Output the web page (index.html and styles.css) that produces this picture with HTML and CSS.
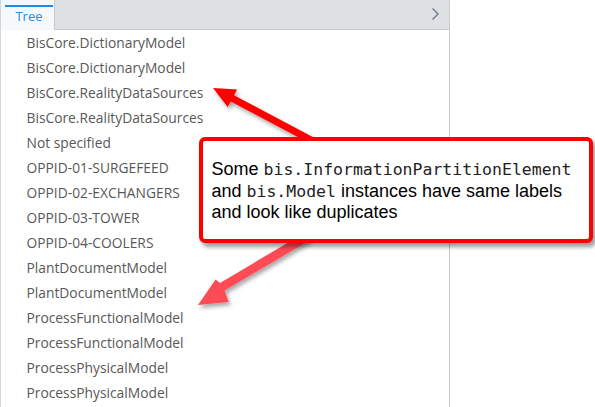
FILE: index.html
```html
<!DOCTYPE html>
<html>
<head>
<meta charset="utf-8">
<link rel="stylesheet" href="styles.css">
</head>
<body>
<div class="panel">
  <div class="header">
    <div class="tab"><span class="tab-label">Tree</span></div>
    <div class="header-fill">
      <svg class="chevron" width="9" height="14" viewBox="0 0 9 14"><path d="M1.5 1.5 L7 7 L1.5 12.5" fill="none" stroke="#6e7a88" stroke-width="1.4"/></svg>
    </div>
  </div>
  <ul class="tree">
    <li>BisCore.DictionaryModel</li>
    <li>BisCore.DictionaryModel</li>
    <li>BisCore.RealityDataSources</li>
    <li>BisCore.RealityDataSources</li>
    <li>Not specified</li>
    <li>OPPID-01-SURGEFEED</li>
    <li>OPPID-02-EXCHANGERS</li>
    <li>OPPID-03-TOWER</li>
    <li>OPPID-04-COOLERS</li>
    <li>PlantDocumentModel</li>
    <li>PlantDocumentModel</li>
    <li>ProcessFunctionalModel</li>
    <li>ProcessFunctionalModel</li>
    <li>ProcessPhysicalModel</li>
    <li>ProcessPhysicalModel</li>
  </ul>
</div>
<svg class="arrows" width="595" height="407" viewBox="0 0 595 407">
  <defs>
    <filter id="sh" x="-20%" y="-20%" width="140%" height="140%">
      <feDropShadow dx="2" dy="3" stdDeviation="2" flood-color="#000" flood-opacity="0.35"/>
    </filter>
  </defs>
  <polygon filter="url(#sh)" fill="#ff0000" points="213,88 237.1,89.5 234.0,95.2 325,143.6 321.8,149.8 230.8,101.4 227.7,107.1"/>
  <polygon filter="url(#sh)" fill="#ff4b55" points="198,305 215.5,279.6 220.0,282.9 306,232 310.6,239.8 224.6,290.6 228.7,302.0"/>
</svg>
<div class="callout">
  <p>Some <code>bis.InformationPartitionElement</code><br>and <code>bis.Model</code> instances have same labels<br>and look like duplicates</p>
</div>
</body>
</html>
```
FILE: styles.css
```css
html, body {
  margin: 0;
  padding: 0;
  background: #ffffff;
  width: 595px;
  height: 407px;
  overflow: hidden;
  position: relative;
}
.panel {
  height: 407px;
  border-left: 1px solid #d3d6d9;
  border-right: 1px solid #c8cbce;
  box-sizing: border-box;
  width: 450px;
  font-family: "Open Sans", sans-serif;
}
.header {
  display: flex;
  height: 30px;
  box-sizing: border-box;
}
.tab {
  width: 54px;
  background: #f7f8f9;
  border-right: 1px solid #c8cbce;
  box-sizing: border-box;
  padding: 5px 1px 0 4px;
}
.tab-label {
  display: block;
  border-top: 2px solid #1f8ae0;
  color: #2a8ae0;
  font-size: 13px;
  line-height: 18px;
  text-align: center;
}
.header-fill {
  flex: 1;
  background: #dee1e4;
  border-bottom: 1px solid #c8cbce;
  display: flex;
  justify-content: flex-end;
  align-items: flex-start;
  padding: 7px 9px 0 0;
}
.tree {
  list-style: none;
  margin: 0;
  padding: 0 0 0 25.5px;
}
.tree li {
  font-size: 13.8px;
  line-height: 25px;
  height: 25px;
  color: #585858;
}
.arrows {
  position: absolute;
  left: 0;
  top: 0;
}
.callout {
  position: absolute;
  left: 199px;
  top: 137px;
  width: 394px;
  height: 106px;
  box-sizing: border-box;
  border: 4px solid #ff0000;
  border-radius: 6px;
  background: #ffffff;
  box-shadow: 3px 4px 4px rgba(0, 0, 0, 0.4);
  padding: 18px 2px 0 8.5px;
}
.callout p {
  margin: 0;
  font-family: "Liberation Sans", Arial, sans-serif;
  font-size: 18px;
  line-height: 21.5px;
  color: #000;
  white-space: nowrap;
}
.callout code {
  font-family: "DejaVu Sans Mono", "Liberation Mono", monospace;
  font-size: 16.5px;
  color: #222;
}
```
